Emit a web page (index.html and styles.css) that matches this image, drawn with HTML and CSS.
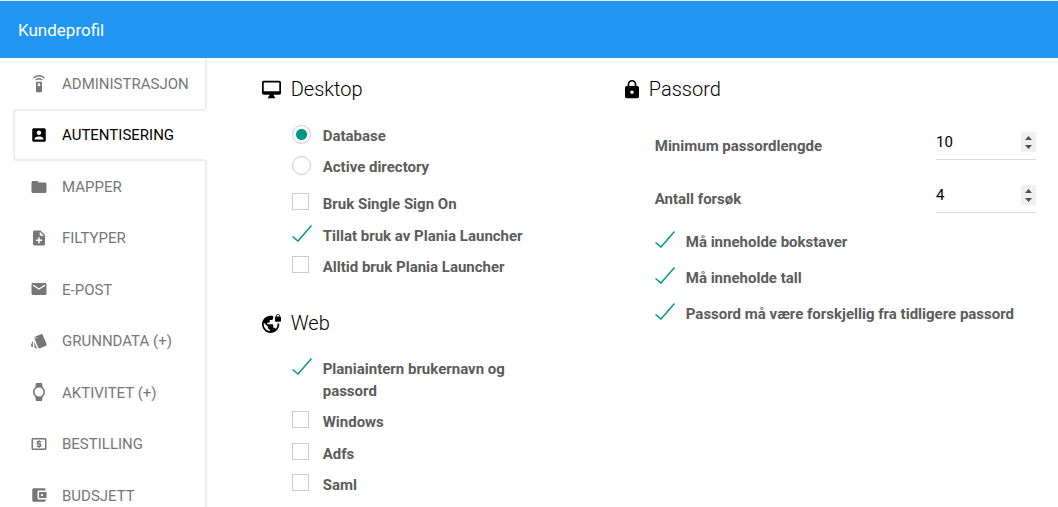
FILE: index.html
```html
<!DOCTYPE html>
<html lang="no">
<head>
    <meta charset="UTF-8">
    <meta name="viewport" content="width=device-width, initial-scale=1.0">
    <title>Kundeprofil</title>
    <link rel="stylesheet" href="styles.css">
</head>
<body>

<header class="topbar">
    <h1>Kundeprofil</h1>
</header>

<div class="page">
    <nav class="tabs">
        <a href="#administrasjon" class="tab">
            <svg viewBox="0 0 24 24"><path d="M15 9H9c-.55 0-1 .45-1 1v12c0 .55.45 1 1 1h6c.55 0 1-.45 1-1V10c0-.55-.45-1-1-1zm-3 6c-1.1 0-2-.9-2-2s.9-2 2-2 2 .9 2 2-.9 2-2 2zM7.05 6.05l1.41 1.41C9.37 6.56 10.62 6 12 6s2.63.56 3.54 1.46l1.41-1.41C15.68 4.78 13.93 4 12 4s-3.68.78-4.95 2.05zM12 0C8.96 0 6.21 1.23 4.22 3.22l1.41 1.41C7.26 3.01 9.51 2 12 2s4.74 1.01 6.36 2.64l1.41-1.41C17.79 1.23 15.04 0 12 0z"/></svg>
            Administrasjon
        </a>
        <a href="#autentisering" class="tab active">
            <svg viewBox="0 0 24 24"><path d="M3 5v14c0 1.1.89 2 2 2h14c1.1 0 2-.9 2-2V5c0-1.1-.9-2-2-2H5c-1.11 0-2 .9-2 2zm12 4c0 1.66-1.34 3-3 3s-3-1.34-3-3 1.34-3 3-3 3 1.34 3 3zm-9 8c0-2 4-3.1 6-3.1s6 1.1 6 3.1v1H6v-1z"/></svg>
            Autentisering
        </a>
        <a href="#mapper" class="tab">
            <svg viewBox="0 0 24 24"><path d="M10 4H4c-1.1 0-1.99.9-1.99 2L2 18c0 1.1.9 2 2 2h16c1.1 0 2-.9 2-2V8c0-1.1-.9-2-2-2h-8l-2-2z"/></svg>
            Mapper
        </a>
        <a href="#filtyper" class="tab">
            <svg viewBox="0 0 24 24"><path d="M14 2H6c-1.1 0-1.99.9-1.99 2L4 20c0 1.1.89 2 1.99 2H18c1.1 0 2-.9 2-2V8l-6-6zm2 14h-3v3h-2v-3H8v-2h3v-3h2v3h3v2zm-3-7V3.5L18.5 9H13z"/></svg>
            Filtyper
        </a>
        <a href="#epost" class="tab">
            <svg viewBox="0 0 24 24"><path d="M20 4H4c-1.1 0-1.99.9-1.99 2L2 18c0 1.1.9 2 2 2h16c1.1 0 2-.9 2-2V6c0-1.1-.9-2-2-2zm0 4l-8 5-8-5V6l8 5 8-5v2z"/></svg>
            E-post
        </a>
        <a href="#grunndata" class="tab">
            <svg viewBox="0 0 24 24"><path d="M2.53 19.65l1.34.56v-9.03l-2.43 5.86c-.41 1.02.08 2.19 1.09 2.61zm19.5-3.7L17.07 3.98c-.31-.75-1.04-1.21-1.81-1.23-.26 0-.53.04-.79.15L7.1 5.95c-.75.31-1.21 1.03-1.23 1.8-.01.27.04.54.15.8l4.96 11.97c.31.76 1.05 1.22 1.83 1.23.26 0 .52-.05.77-.15l7.36-3.05c1.02-.42 1.51-1.59 1.09-2.6zM7.88 8.75c-.55 0-1-.45-1-1s.45-1 1-1 1 .45 1 1-.45 1-1 1zm-2 11c0 1.1.9 2 2 2h1.45l-3.45-8.34v6.34z"/></svg>
            Grunndata (+)
        </a>
        <a href="#aktivitet" class="tab">
            <svg viewBox="0 0 24 24"><path d="M20 12c0-2.54-1.19-4.81-3.04-6.27L16 0H8l-.95 5.73C5.19 7.19 4 9.45 4 12s1.19 4.81 3.05 6.27L8 24h8l.96-5.73C18.81 16.81 20 14.54 20 12zM6 12c0-3.31 2.69-6 6-6s6 2.69 6 6-2.69 6-6 6-6-2.69-6-6z"/></svg>
            Aktivitet (+)
        </a>
        <a href="#bestilling" class="tab">
            <svg viewBox="0 0 24 24"><path d="M11 17h2v-1h1c.55 0 1-.45 1-1v-3c0-.55-.45-1-1-1h-3v-1h4V8h-2V7h-2v1h-1c-.55 0-1 .45-1 1v3c0 .55.45 1 1 1h3v1H9v2h2v1zm9-13H4c-1.11 0-1.99.89-1.99 2L2 18c0 1.11.89 2 2 2h16c1.11 0 2-.89 2-2V6c0-1.11-.89-2-2-2zm0 14H4V6h16v12z"/></svg>
            Bestilling
        </a>
        <a href="#budsjett" class="tab">
            <svg viewBox="0 0 24 24"><path d="M21 18v1c0 1.1-.9 2-2 2H5c-1.11 0-2-.9-2-2V5c0-1.1.89-2 2-2h14c1.1 0 2 .9 2 2v1h-9c-1.11 0-2 .9-2 2v8c0 1.1.89 2 2 2h9zm-9-2h10V8H12v8zm4-2.5c-.83 0-1.5-.67-1.5-1.5s.67-1.5 1.5-1.5 1.5.67 1.5 1.5-.67 1.5-1.5 1.5z"/></svg>
            Budsjett
        </a>
    </nav>

    <main class="content">
        <div class="column">
            <section class="group">
                <h2>
                    <svg class="icon-wide" viewBox="1 0 22 24"><path d="M21 2H3c-1.1 0-2 .9-2 2v12c0 1.1.9 2 2 2h7l-2 3v1h8v-1l-2-3h7c1.1 0 2-.9 2-2V4c0-1.1-.9-2-2-2zm0 12H3V4h18v10z"/></svg>
                    Desktop
                </h2>
                <div class="options radios">
                    <label class="option"><input type="radio" name="desktop" checked><span>Database</span></label>
                    <label class="option"><input type="radio" name="desktop"><span>Active directory</span></label>
                </div>
                <div class="options">
                    <label class="option"><input type="checkbox"><span>Bruk Single Sign On</span></label>
                    <label class="option"><input type="checkbox" checked><span>Tillat bruk av Plania Launcher</span></label>
                    <label class="option"><input type="checkbox"><span>Alltid bruk Plania Launcher</span></label>
                </div>
            </section>

            <section class="group">
                <h2>
                    <svg class="icon-wide" viewBox="1 0 22 24"><path d="M22 4v-.5C22 2.12 20.88 1 19.5 1S17 2.12 17 3.5V4c-.55 0-1 .45-1 1v4c0 .55.45 1 1 1h5c.55 0 1-.45 1-1V5c0-.55-.45-1-1-1zm-.8 0h-3.4v-.5c0-.94.76-1.7 1.7-1.7s1.7.76 1.7 1.7V4zm-2.28 8c.04.33.08.66.08 1 0 2.08-.8 3.97-2.1 5.39-.26-.81-1-1.39-1.9-1.39h-1v-3c0-.55-.45-1-1-1H7v-2h2c.55 0 1-.45 1-1V8h2c1.1 0 2-.9 2-2V3.46c-.95-.3-1.95-.46-3-.46C5.48 3 1 7.48 1 13s4.48 10 10 10 10-4.48 10-10c0-.34-.02-.67-.05-1h-2.03zM10 20.93c-3.95-.49-7-3.85-7-7.93 0-.62.08-1.21.21-1.79L8 16v1c0 1.1.9 2 2 2v1.93z"/></svg>
                    Web
                </h2>
                <div class="options">
                    <label class="option"><input type="checkbox" checked><span>Planiaintern brukernavn og passord</span></label>
                    <label class="option"><input type="checkbox"><span>Windows</span></label>
                    <label class="option"><input type="checkbox"><span>Adfs</span></label>
                    <label class="option"><input type="checkbox"><span>Saml</span></label>
                </div>
            </section>
        </div>

        <div class="column">
            <section class="group">
                <h2>
                    <svg class="icon-narrow" viewBox="4 0 16 24"><path d="M18 8h-1V6c0-2.76-2.24-5-5-5S7 3.24 7 6v2H6c-1.1 0-2 .9-2 2v10c0 1.1.9 2 2 2h12c1.1 0 2-.9 2-2V10c0-1.1-.9-2-2-2zm-6 9c-1.1 0-2-.9-2-2s.9-2 2-2 2 .9 2 2-.9 2-2 2zm3.1-9H8.9V6c0-1.71 1.39-3.1 3.1-3.1 1.71 0 3.1 1.39 3.1 3.1v2z"/></svg>
                    Passord
                </h2>
                <div class="fields">
                    <div class="field">
                        <label for="min-length">Minimum passordlengde</label>
                        <input type="number" id="min-length" value="10">
                    </div>
                    <div class="field">
                        <label for="attempts">Antall forsøk</label>
                        <input type="number" id="attempts" value="4">
                    </div>
                </div>
                <div class="options spacious">
                    <label class="option"><input type="checkbox" checked><span>Må inneholde bokstaver</span></label>
                    <label class="option"><input type="checkbox" checked><span>Må inneholde tall</span></label>
                    <label class="option"><input type="checkbox" checked><span>Passord må være forskjellig fra tidligere passord</span></label>
                </div>
            </section>
        </div>
    </main>
</div>

</body>
</html>
```
FILE: styles.css
```css
* {
    box-sizing: border-box;
}

body {
    margin: 0;
    height: 100vh;
    overflow: hidden;
    display: flex;
    flex-direction: column;
    font-family: Roboto, sans-serif;
    font-size: 15px;
    line-height: 1.43;
    color: #000;
    background: #fff;
}

.topbar {
    flex: none;
    padding: 17px 18px 15px;
    background: #2196f3;
    border-top: 1px solid #eee;
    color: #fff;
}

.topbar h1 {
    margin: 0;
    font-size: 17px;
    line-height: 25px;
    font-weight: 400;
}

.page {
    flex: 1;
    min-height: 0;
    display: flex;
}

/* Left tabs */
.tabs {
    flex: none;
    padding-left: 13px;
}

.tab {
    display: flex;
    align-items: center;
    gap: 14px;
    padding: 16px 16px 14px 17px;
    border-right: 2px solid #eee;
    color: #777;
    text-decoration: none;
    text-transform: uppercase;
}

.tab svg {
    width: 18px;
    height: 18px;
    margin-bottom: 2px;
    fill: currentColor;
}

.tab.active {
    padding: 14px 16px 12px 15px;
    color: #000;
    border: 2px solid #eee;
    border-right-color: #fff;
    border-radius: 4px 0 0 4px;
}

/* Settings */
.content {
    flex: 1;
    display: grid;
    grid-template-columns: 8fr 11fr;
    column-gap: 64px;
    align-items: start;
    padding: 17px 22px 0 55px;
}

.group {
    margin-bottom: 30px;
}

.group h2 {
    display: flex;
    align-items: center;
    gap: 10px;
    margin: 0 0 21px;
    font-size: 20px;
    font-weight: 300;
}

.icon-wide {
    width: 19px;
    height: 21px;
}

.icon-narrow {
    width: 14px;
    height: 21px;
}

.options,
.fields {
    display: grid;
    gap: 9px;
    margin-left: 30px;
    font-weight: 700;
    color: #5c5c5c;
}

.options {
    padding-right: 16px;
}

.options.radios {
    margin-bottom: 15px;
}

.options.spacious {
    gap: 14px;
    padding-right: 0;
}

.option {
    display: grid;
    grid-template-columns: 31px 1fr;
    align-items: start;
}

.option span {
    padding-top: 1px;
}

.option input {
    appearance: none;
    margin: 0;
    width: 17px;
    height: 17px;
    border: 1px solid #ccc;
    background: #fff;
}

.option input[type="radio"] {
    width: 19px;
    height: 19px;
    border-radius: 50%;
}

.option input[type="radio"]:checked {
    background: radial-gradient(circle, #009688 5px, #fff 6px);
}

.option input[type="checkbox"]:checked {
    width: 20px;
    border: none;
    background: url("data:image/svg+xml,%3Csvg xmlns='http://www.w3.org/2000/svg' viewBox='0 0 20 17'%3E%3Cpath d='M.5 11.5l5.5 4.5L19.5 .5' fill='none' stroke='%23009688' stroke-width='1.5'/%3E%3C/svg%3E") no-repeat;
}

.fields {
    gap: 18px;
    margin-bottom: 18px;
}

.field {
    display: flex;
    justify-content: space-between;
    align-items: flex-end;
}

.field label {
    padding-bottom: 2px;
}

.field input {
    width: 100px;
    height: 35px;
    padding: 0;
    border: none;
    border-bottom: 1px solid #ddd;
    background: transparent;
    font-family: inherit;
    font-size: 15px;
    line-height: 20px;
    color: #000;
}

.field input::-webkit-inner-spin-button {
    appearance: none;
    opacity: 1;
    width: 15px;
    height: 20px;
    background: #f0f0f0 url("data:image/svg+xml,%3Csvg xmlns='http://www.w3.org/2000/svg' viewBox='0 0 15 20'%3E%3Cpath d='M4 8l3.5-4L11 8zM4 13h7l-3.500 4z' fill='%23505050'/%3E%3C/svg%3E") no-repeat;
}
```
